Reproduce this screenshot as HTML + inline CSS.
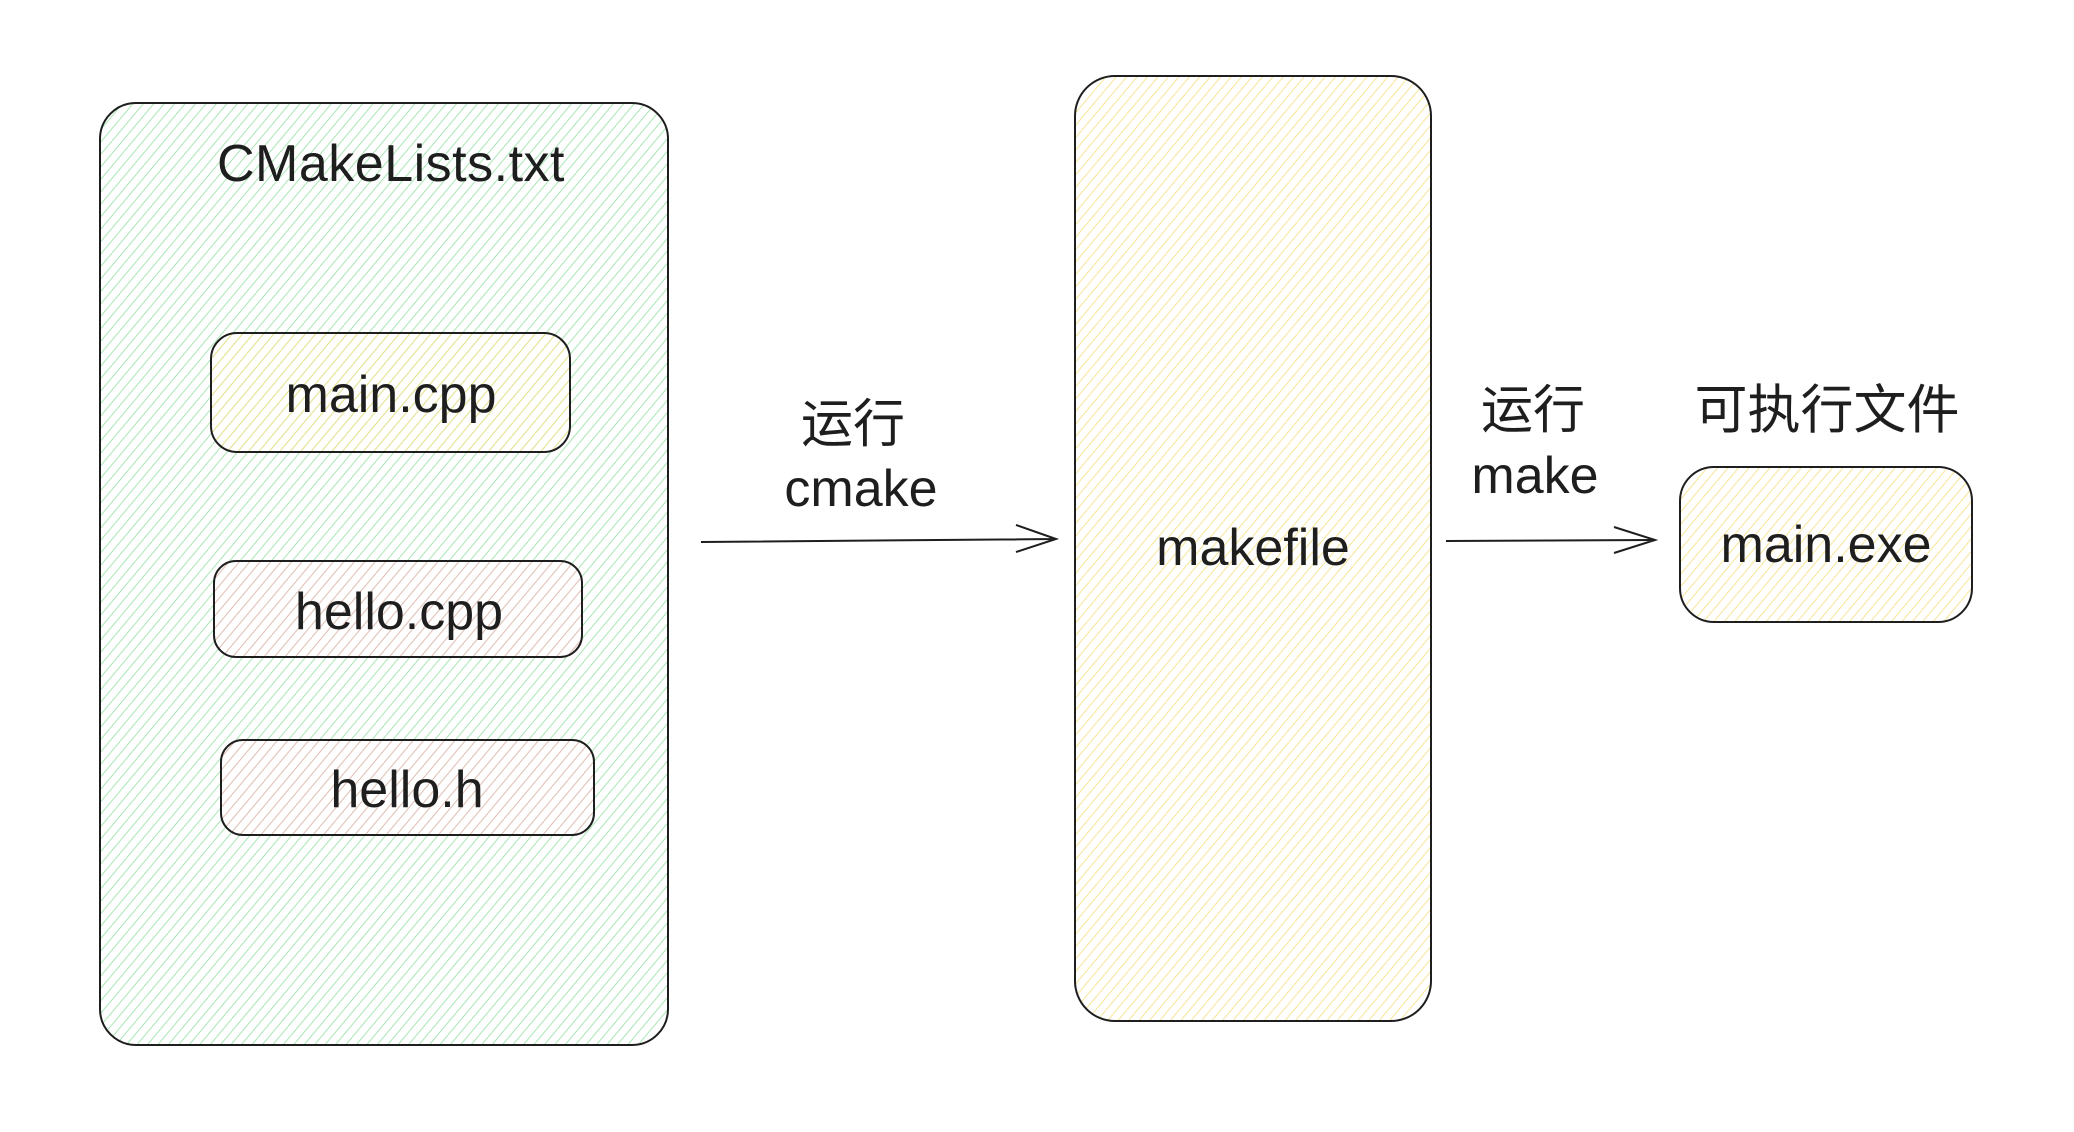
<!DOCTYPE html>
<html><head><meta charset="utf-8"><style>
html,body{margin:0;padding:0;background:#fff;width:2074px;height:1132px;overflow:hidden}
svg{display:block}
text{font-family:"Liberation Sans","Noto Sans CJK SC",sans-serif;font-size:52px;fill:#1e1e1e;text-anchor:middle}
</style></head><body>
<svg width="2074" height="1132" viewBox="0 0 2074 1132" xmlns="http://www.w3.org/2000/svg">
<defs>
<pattern id="g" width="8" height="8" patternUnits="userSpaceOnUse" patternTransform="rotate(40)">
<line x1="0" y1="0" x2="0" y2="8" stroke="#9fe3ad" stroke-width="1.8"/></pattern>
<pattern id="y" width="8" height="8" patternUnits="userSpaceOnUse" patternTransform="rotate(40)">
<line x1="0" y1="0" x2="0" y2="8" stroke="#f5e28c" stroke-width="1.8"/></pattern>
<pattern id="r" width="8" height="8" patternUnits="userSpaceOnUse" patternTransform="rotate(40)">
<line x1="0" y1="0" x2="0" y2="8" stroke="#f0bcbc" stroke-width="1.8"/></pattern>
</defs>
<g stroke="#1e1e1e" stroke-width="2">
<rect x="100" y="103" width="568" height="942" rx="36" fill="url(#g)"/>
<rect x="211" y="333" width="359" height="119" rx="26" fill="url(#y)"/>
<rect x="214" y="561" width="368" height="96" rx="22" fill="url(#r)"/>
<rect x="221" y="740" width="373" height="95" rx="22" fill="url(#r)"/>
<rect x="1075" y="76" width="356" height="945" rx="40" fill="url(#y)"/>
<rect x="1680" y="467" width="292" height="155" rx="34" fill="url(#y)"/>
<path d="M701 542 L1056 539 M1016 525 L1056 539 L1016 552" fill="none"/>
<path d="M1446 541 L1655 540 M1614 527 L1655 540 L1614 553" fill="none"/>
</g>
<text x="391" y="181" style="letter-spacing:0.5px">CMakeLists.txt</text>
<text x="391" y="412">main.cpp</text>
<text x="399" y="629">hello.cpp</text>
<text x="407" y="807">hello.h</text>
<text x="853" y="442" style="font-size:52px">运行</text>
<text x="861" y="506">cmake</text>
<text x="1253" y="565">makefile</text>
<text x="1533" y="428" style="font-size:52px">运行</text>
<text x="1535" y="493">make</text>
<text x="1827" y="428" style="font-size:53px">可执行文件</text>
<text x="1826" y="562">main.exe</text>
</svg>
</body></html>
